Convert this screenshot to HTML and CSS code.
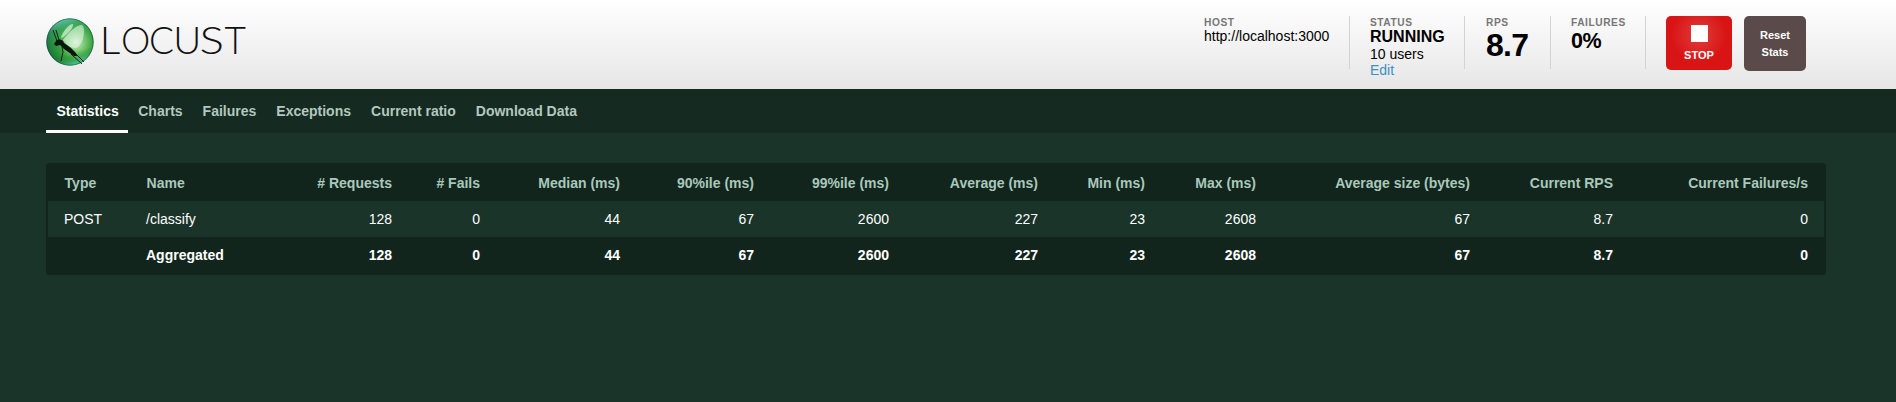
FILE: index.html
```html
<!DOCTYPE html>
<html lang="en">
<head>
<meta charset="utf-8">
<title>Locust</title>
<link rel="stylesheet" href="styles.css">
</head>
<body>
<header class="top">
  <div class="logo">
    <svg class="logo-mark" viewBox="0 0 48 48" width="48" height="48">
      <defs>
        <radialGradient id="orb" cx="0.62" cy="0.5" r="0.64">
          <stop offset="0" stop-color="#e6f8e0"/>
          <stop offset="0.28" stop-color="#84d07c"/>
          <stop offset="0.58" stop-color="#35a03a"/>
          <stop offset="0.86" stop-color="#1d7d36"/>
          <stop offset="1" stop-color="#165347"/>
        </radialGradient>
        <linearGradient id="rim" x1="0.25" y1="0" x2="0.6" y2="1">
          <stop offset="0" stop-color="#7be0dc" stop-opacity="0.9"/>
          <stop offset="0.25" stop-color="#4db58c" stop-opacity="0.3"/>
          <stop offset="0.75" stop-color="#1f8430" stop-opacity="0"/>
          <stop offset="1" stop-color="#63d3b4" stop-opacity="0.9"/>
        </linearGradient>
      </defs>
      <circle cx="24" cy="24" r="23.6" fill="url(#orb)"/>
      <circle cx="24" cy="24" r="23.6" fill="url(#rim)"/>
      <circle cx="24" cy="24" r="23.2" fill="none" stroke="#174b4c" stroke-width="0.8" opacity="0.7"/>
      <path d="M15 19C18 12 23 6 27 6C28 9 22 16 16 20Z" fill="#e4f7e4" opacity="0.65"/>
      <path d="M17 22C22 15 30 7 36 7C40 10 38 24 32 29C28 32 21 28 17 22Z" fill="#e4f7e4" opacity="0.6"/>
      <path d="M8 26L10 23C11 21 15 21 17 23L18 25L25 30L30 35L31 38L28 38L18 31L14 27L10 28Z" fill="#0c160e"/>
      <path d="M11 23L7 12M13 22L10 12M16 29L17 34L15 43M25 36L36 46M29 35L38 44" fill="none" stroke="#0c160e" stroke-width="0.9"/>
    </svg>
    <svg class="logo-name" viewBox="0 0 150 40" width="150" height="40">
      <text y="32.3"><tspan x="-1.3" textLength="20.5" lengthAdjust="spacingAndGlyphs">L</tspan><tspan x="20">O</tspan><tspan x="48">C</tspan><tspan x="72.3" textLength="28" lengthAdjust="spacingAndGlyphs">U</tspan><tspan x="98.5" textLength="24.5" lengthAdjust="spacingAndGlyphs">S</tspan><tspan x="123.5">T</tspan></text>
    </svg>
  </div>
  <div class="boxes">
    <div class="box host"><span class="label">Host</span><span class="plain">http://localhost:3000</span></div>
    <div class="box status"><span class="label">Status</span><span class="state">RUNNING</span><span class="plain">10 users</span><a class="edit">Edit</a></div>
    <div class="box rps"><span class="label">RPS</span><span class="big">8.7</span></div>
    <div class="box fails"><span class="label">Failures</span><span class="medium">0%</span></div>
    <div class="button stop"><i class="square"></i>STOP</div>
    <div class="button reset">Reset<br>Stats</div>
  </div>
</header>
<nav class="tabs">
  <a class="tab current">Statistics</a><a class="tab">Charts</a><a class="tab">Failures</a><a class="tab">Exceptions</a><a class="tab">Current ratio</a><a class="tab">Download Data</a>
</nav>
<main class="content">
  <table class="stats">
    <colgroup><col class="c1"><col class="c2"><col class="c3"><col class="c4"><col class="c5"><col class="c6"><col class="c7"><col class="c8"><col class="c9"><col class="c10"><col class="c11"><col class="c12"><col class="c13"></colgroup>
    <thead>
      <tr><th>Type</th><th>Name</th><th># Requests</th><th># Fails</th><th>Median (ms)</th><th>90%ile (ms)</th><th>99%ile (ms)</th><th>Average (ms)</th><th>Min (ms)</th><th>Max (ms)</th><th>Average size (bytes)</th><th>Current RPS</th><th>Current Failures/s</th></tr>
    </thead>
    <tbody>
      <tr><td>POST</td><td>/classify</td><td>128</td><td>0</td><td>44</td><td>67</td><td>2600</td><td>227</td><td>23</td><td>2608</td><td>67</td><td>8.7</td><td>0</td></tr>
      <tr class="total"><td></td><td>Aggregated</td><td>128</td><td>0</td><td>44</td><td>67</td><td>2600</td><td>227</td><td>23</td><td>2608</td><td>67</td><td>8.7</td><td>0</td></tr>
    </tbody>
  </table>
</main>
</body>
</html>
```
FILE: styles.css
```css
* { box-sizing: border-box; }
body {
  margin: 0;
  height: 402px;
  overflow: hidden;
  background: #1a3429;
  font: 14px/16px Arial, "Liberation Sans", sans-serif;
}
.top {
  display: flex;
  justify-content: space-between;
  height: 89px;
  padding: 16px 90px 0 46px;
  background: linear-gradient(#ffffff, #e6e6e6);
}
.logo { display: flex; align-items: flex-start; padding-top: 2px; }
.logo-mark { display: block; }
.logo-name { display: block; margin: 4px 0 0 7px; overflow: visible; }
.logo-name text { font-family: Lato, sans-serif; font-weight: 300; font-size: 37px; fill: #111; }
.boxes { display: flex; align-items: flex-start; }
.box {
  display: flex;
  flex-direction: column;
  height: 53px;
  border-right: 1px solid #d3d3d3;
}
.box.host { width: 146px; }
.box.status { width: 115px; padding-left: 20px; }
.box.rps { width: 86px; padding-left: 21px; }
.box.fails { width: 95px; padding-left: 20px; }
.label {
  height: 12px;
  padding-top: 1px;
  font-size: 10.2px;
  line-height: 12px;
  font-weight: bold;
  letter-spacing: 0.55px;
  text-transform: uppercase;
  color: #777;
}
.plain { flex: none; height: 16px; color: #000; }
.state { flex: none; height: 18px; font-size: 16px; line-height: 18px; font-weight: bold; }
.edit { color: #3d8fc4; }
.big { font-size: 32px; line-height: 35px; font-weight: bold; letter-spacing: -0.7px; }
.medium { font-size: 21.5px; line-height: 26px; font-weight: bold; letter-spacing: -0.5px; }
.button {
  color: #fff;
  font-size: 11px;
  font-weight: bold;
  text-align: center;
  border-radius: 5px;
}
.stop {
  display: flex;
  flex-direction: column;
  align-items: center;
  gap: 5px;
  width: 66px;
  height: 54px;
  margin-left: 20px;
  padding-top: 9px;
  background: radial-gradient(circle at 50% 35%, #e23c3c 0, #d81414 28px);
}
.square { width: 17px; height: 17px; background: #fff; }
.reset {
  width: 62px;
  height: 55px;
  margin-left: 12px;
  padding-top: 11px;
  line-height: 17px;
  background: #5a4b4a;
}
.tabs { display: flex; height: 44px; padding-left: 46px; background: #152a21; }
.tab { padding: 14px 10px 0; font-weight: bold; color: #b3c8bf; }
.tab.current { padding: 14px 9.5px 0 10.5px; color: #fff; border-bottom: 3px solid #fff; }
.content { padding: 30px 70px 0 46px; }
.stats {
  width: 1780px;
  table-layout: fixed;
  border-collapse: separate;
  border-spacing: 0;
  border: 2px solid #12251d;
  border-radius: 3px;
  background: #12251d;
}
.stats th, .stats td { height: 36px; padding: 0 16px; text-align: right; color: #fff; white-space: nowrap; }
.stats th { color: #a9c8bb; }
.stats th:nth-child(-n+2), .stats td:nth-child(-n+2) { text-align: left; }
.stats th:nth-child(-n+2) { padding-left: 16.6px; }
.stats tbody td { background: #1a3429; }
.stats .total td { background: #12251d; font-weight: bold; }
.c1 { width: 82px; }
.c2 { width: 163px; }
.c3 { width: 115px; }
.c4 { width: 88px; }
.c5 { width: 140px; }
.c6 { width: 134px; }
.c7 { width: 135px; }
.c8 { width: 149px; }
.c9 { width: 107px; }
.c10 { width: 111px; }
.c11 { width: 214px; }
.c12 { width: 143px; }
.c13 { width: 195px; }
```
